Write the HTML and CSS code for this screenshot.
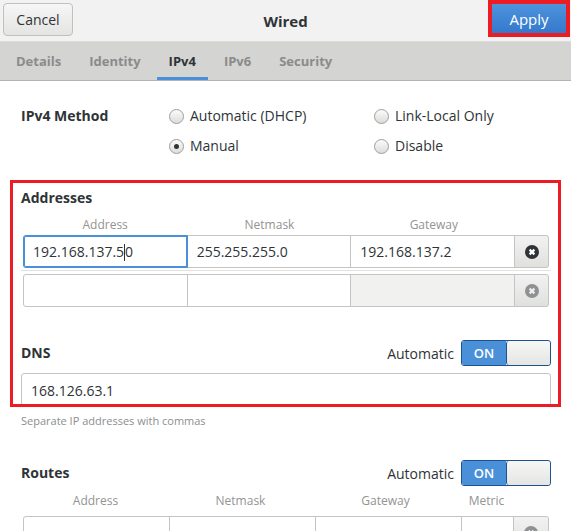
FILE: index.html
```html
<!DOCTYPE html>
<html lang="en">
<head>
  <meta charset="UTF-8">
  <title>Wired</title>
  <link rel="stylesheet" href="styles.css">
</head>
<body>

  <header class="titlebar">
    <button class="btn btn-cancel">Cancel</button>
    <div class="title">Wired</div>
    <button class="btn btn-apply">Apply</button>
  </header>

  <nav class="tabs">
    <a class="tab">Details</a>
    <a class="tab">Identity</a>
    <a class="tab active">IPv4</a>
    <a class="tab">IPv6</a>
    <a class="tab">Security</a>
  </nav>

  <main class="page">
    <div class="method">
      <div class="label">IPv4 Method</div>
      <label class="radio"><span class="dot"></span>Automatic (DHCP)</label>
      <label class="radio"><span class="dot"></span>Link-Local Only</label>
      <label class="radio radio-2"><span class="dot checked"></span>Manual</label>
      <label class="radio"><span class="dot"></span>Disable</label>
    </div>

    <section class="mark">
      <div class="label">Addresses</div>
      <div class="cols cols-3">
        <span>Address</span><span>Netmask</span><span>Gateway</span><span></span>
      </div>
      <div class="row cols-3">
        <div class="cell focus">192.168.137.5<span class="caret"></span>0</div>
        <div class="cell">255.255.255.0</div>
        <div class="cell">192.168.137.2</div>
        <div class="cell remove">
          <svg width="14" height="14" viewBox="0 0 14 14"><circle cx="7" cy="7" r="7" fill="#2e3436"/><path d="M4.6 4.6l4.8 4.8M9.4 4.6l-4.8 4.8" stroke="#fff" stroke-width="2.2"/></svg>
        </div>
      </div>
      <div class="sep"></div>
      <div class="row cols-3">
        <div class="cell"></div>
        <div class="cell"></div>
        <div class="cell off"></div>
        <div class="cell remove">
          <svg width="14" height="14" viewBox="0 0 14 14"><circle cx="7" cy="7" r="7" fill="#8e9192"/><path d="M4.6 4.6l4.8 4.8M9.4 4.6l-4.8 4.8" stroke="#ededed" stroke-width="2.2"/></svg>
        </div>
      </div>

      <div class="head dns-head">
        <div class="label">DNS</div>
        <div class="auto">Automatic
          <div class="switch"><span class="on">ON</span><span class="knob"></span></div>
        </div>
      </div>
      <div class="entry">168.126.63.1</div>
    </section>

    <p class="hint">Separate IP addresses with commas</p>

    <div class="head routes-head">
      <div class="label">Routes</div>
      <div class="auto">Automatic
        <div class="switch"><span class="on">ON</span><span class="knob"></span></div>
      </div>
    </div>
    <div class="cols cols-4">
      <span>Address</span><span>Netmask</span><span>Gateway</span><span>Metric</span><span></span>
    </div>
    <div class="row cols-4">
      <div class="cell"></div>
      <div class="cell"></div>
      <div class="cell"></div>
      <div class="cell"></div>
      <div class="cell remove">
        <svg width="14" height="14" viewBox="0 0 14 14"><circle cx="7" cy="7" r="7" fill="#8e9192"/><path d="M4.6 4.6l4.8 4.8M9.4 4.6l-4.8 4.8" stroke="#ededed" stroke-width="2.2"/></svg>
      </div>
    </div>
  </main>

</body>
</html>
```

FILE: styles.css
```css
* {
  margin: 0;
  padding: 0;
  box-sizing: border-box;
}

html, body {
  height: 100%;
  overflow: hidden;
  background: #fff;
  color: #2e3436;
  font-family: "Open Sans", "Noto Sans", sans-serif;
  font-size: 14px;
}

/* title bar */
.titlebar {
  height: 42px;
  display: grid;
  grid-template-columns: 1fr auto 1fr;
  align-items: start;
  background: #f2f2f2;
  border-bottom: 1px solid #dcdcdb;
}

.btn {
  font-family: inherit;
  font-size: 14px;
  color: #2e3436;
  cursor: pointer;
}

.btn-cancel {
  justify-self: start;
  margin: 3px 0 0 3px;
  width: 70px;
  height: 33px;
  border: 1px solid #c0c0be;
  border-radius: 4px;
  background: linear-gradient(#f6f6f6, #e4e4e3);
}

.title {
  align-self: center;
  font-weight: bold;
  font-size: 15px;
}

.btn-apply {
  justify-self: end;
  margin-right: 1px;
  width: 82px;
  height: 37px;
  border: 4px solid #ed1c24;
  background: linear-gradient(#4d93dd, #3479cc);
  color: #fff;
  font-size: 15px;
}

/* tabs */
.tabs {
  height: 39px;
  display: flex;
  gap: 4px;
  padding-left: 4px;
  background: #d4d4d2;
  border-bottom: 1px solid #b4b4b1;
}

.tab {
  display: flex;
  align-items: center;
  padding: 3px 12px 0;
  font-size: 13px;
  font-weight: bold;
  color: #8b8b8a;
  border-bottom: 3px solid transparent;
}

.tab.active {
  color: #2e3436;
  border-bottom-color: #4a90d9;
}

/* content */
.page {
  padding: 0 20px 0 21px;
}

.label {
  font-weight: bold;
  line-height: 20px;
}

.method {
  display: grid;
  grid-template-columns: 148px 205px auto;
  grid-auto-rows: 20px;
  row-gap: 10px;
  padding-top: 25px;
}

.radio {
  display: flex;
  align-items: center;
  gap: 6px;
  line-height: 20px;
}

.radio-2 {
  grid-column: 2;
}

.dot {
  width: 15px;
  height: 15px;
  border-radius: 50%;
  border: 1px solid #9d9d9a;
  background: linear-gradient(#fbfbfb, #dcdcda);
  display: flex;
  align-items: center;
  justify-content: center;
}

.dot.checked::after {
  content: "";
  width: 5px;
  height: 5px;
  border-radius: 50%;
  background: #2e3436;
}

/* annotated block */
.mark {
  margin: 24px -10px 0 -11px;
  padding: 5px 7px 0 8px;
  border: 3px solid #ed1c24;
  height: 227px;
  overflow: hidden;
}

.cols {
  display: grid;
  margin: 9px 2px 2px;
  font-size: 12px;
  line-height: 16px;
  color: #939392;
  text-align: center;
}

.cols-3 {
  grid-template-columns: 1fr 1fr 1fr 33px;
}

.cols-4 {
  grid-template-columns: 145px 145px 145px 1fr 34px;
}

.row {
  display: grid;
  height: 33px;
  margin: 0 2px;
  gap: 1px;
  border: 1px solid #c4c4c1;
  border-radius: 3px;
  background: #c4c4c1;
  text-align: left;
}

.cell {
  background: #fff;
  padding-left: 9px;
  line-height: 31px;
  font-size: 14px;
  color: #2e3436;
  white-space: nowrap;
}

.cell:first-child {
  border-radius: 2px 0 0 2px;
}

.cell.focus {
  outline: 1px solid #4a90d9;
  box-shadow: inset 0 0 0 1px #4a90d9;
  position: relative;
}

.caret {
  display: inline-block;
  width: 1px;
  height: 17px;
  background: #2e3436;
  vertical-align: -4px;
}

.cell.off {
  background: #f1f1f0;
}

.cell.remove {
  padding: 0;
  display: flex;
  align-items: center;
  justify-content: center;
  background: linear-gradient(#f2f2f2, #e0e0df);
  border-radius: 0 2px 2px 0;
}

.sep {
  height: 1px;
  margin: 2px 0 3px;
  background: #e2e2e0;
}

.head {
  display: flex;
  justify-content: space-between;
  align-items: center;
  height: 26px;
}

.dns-head {
  margin-top: 33px;
}

.auto {
  display: flex;
  align-items: center;
  gap: 7px;
}

.switch {
  display: flex;
  width: 90px;
  height: 26px;
  border: 1px solid #1e528c;
  border-radius: 3px;
  overflow: hidden;
}

.switch .on {
  width: 44px;
  background: #4a90d9;
  color: #fff;
  font-size: 13px;
  font-weight: 600;
  line-height: 24px;
  text-align: center;
}

.switch .knob {
  flex: 1;
  border-left: 1px solid #1e528c;
  border-radius: 3px;
  background: linear-gradient(#f7f7f7, #e4e4e3);
}

.entry {
  margin-top: 7px;
  height: 33px;
  padding: 1px 0 0 9px;
  border: 1px solid #c4c4c1;
  border-radius: 3px;
  line-height: 31px;
}

.hint {
  margin-top: 7px;
  font-size: 11px;
  line-height: 14px;
  color: #8b8e8f;
}

.routes-head {
  margin-top: 32px;
}

.cols-4 {
  margin-top: 7px;
  margin-bottom: 2px;
}
```
